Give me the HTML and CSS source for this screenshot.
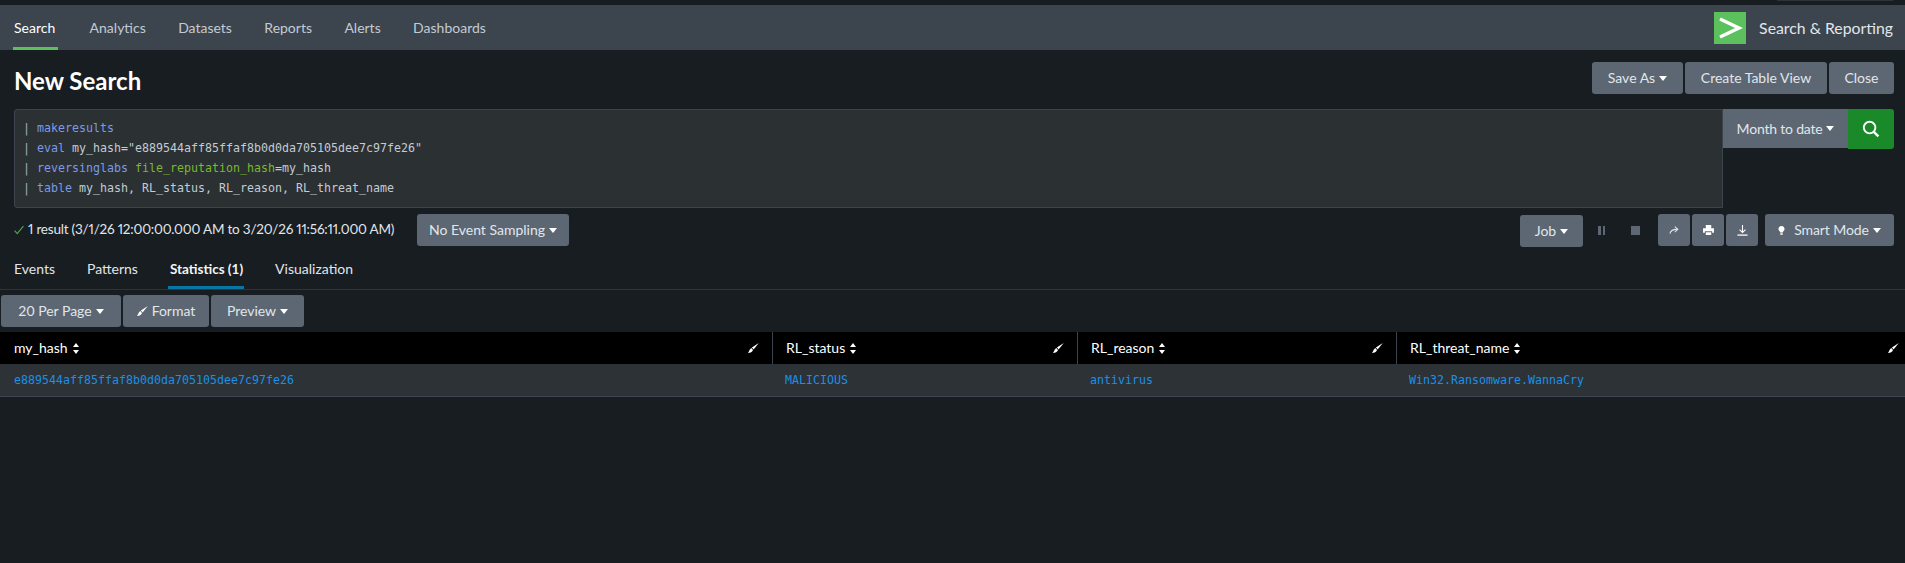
FILE: index.html
```html
<!DOCTYPE html>
<html lang="en">
<head>
<meta charset="utf-8">
<title>New Search</title>
<link rel="stylesheet" href="styles.css">
</head>
<body>
<div class="topstrip"><div class="topmark"></div></div>
<nav class="appnav">
  <a class="navlink active">Search</a>
  <a class="navlink">Analytics</a>
  <a class="navlink">Datasets</a>
  <a class="navlink">Reports</a>
  <a class="navlink">Alerts</a>
  <a class="navlink">Dashboards</a>
  <div class="appbrand">
    <svg class="applogo" viewBox="0 0 32 32"><rect width="32" height="32" fill="#5cc05c"/><path d="M6 7 25 16 6 25" fill="none" stroke="#fff" stroke-width="3.4"/></svg>
    <span>Search &amp; Reporting</span>
  </div>
</nav>
<header class="titlerow">
  <h1>New Search</h1>
  <div class="btngroup">
    <button class="btn savebtn">Save As<i class="caret"></i></button>
    <button class="btn ctvbtn">Create Table View</button>
    <button class="btn closebtn">Close</button>
  </div>
</header>
<section class="searchbar">
  <div class="query">
    <div><span class="pipe">|</span> <span class="cmd">makeresults</span></div>
    <div><span class="pipe">|</span> <span class="cmd">eval</span> my_hash="e889544aff85ffaf8b0d0da705105dee7c97fe26"</div>
    <div><span class="pipe">|</span> <span class="cmd">reversinglabs</span> <span class="arg">file_reputation_hash</span>=my_hash</div>
    <div><span class="pipe">|</span> <span class="cmd">table</span> my_hash, RL_status, RL_reason, RL_threat_name</div>
  </div>
  <button class="btn timebtn">Month to date<i class="caret"></i></button>
  <button class="gobtn" aria-label="Search">
    <svg viewBox="0 0 18 18" width="18" height="18"><circle cx="7.6" cy="7.6" r="5.8" fill="none" stroke="#fff" stroke-width="1.9"/><path d="M11.8 11.8 16.4 16.4" stroke="#fff" stroke-width="2.4"/></svg>
  </button>
</section>
<section class="statusrow">
  <svg class="check" viewBox="0 0 10 10" width="10" height="10"><path d="M.6 5.6 3.2 8.6 9.4 1.2" fill="none" stroke="#53a051" stroke-width="1.2"/></svg>
  <span class="resulttext">1 result (3/1/26 12:00:00.000 AM to 3/20/26 11:56:11.000 AM)</span>
  <button class="btn samplebtn">No Event Sampling<i class="caret"></i></button>
  <div class="spacer"></div>
  <button class="btn jobbtn">Job<i class="caret"></i></button>
  <span class="jobicon pause"><i></i><i></i></span>
  <span class="jobicon stop"></span>
  <button class="btn iconbtn" aria-label="Share">
    <svg viewBox="0 0 12 10" width="10" height="8"><path d="M1 9.6C1.4 5.6 4 4.2 9.6 4.2" fill="none" stroke="#e1e6eb" stroke-width="1.3"/><path d="M7 .8 10.8 4.2 7 7.6" fill="none" stroke="#e1e6eb" stroke-width="1.3"/></svg>
  </button>
  <button class="btn iconbtn" aria-label="Print">
    <svg viewBox="0 0 12 11" width="11" height="10"><path d="M3 0h6v3.5H3zM0 3.5h12v5H10V7H2v1.5H0zM3 8h6v3H3z" fill="#fff"/></svg>
  </button>
  <button class="btn iconbtn" aria-label="Export">
    <svg viewBox="0 0 12 12" width="11" height="11"><path d="M6 0v7.5M2.8 5 6 8.2 9.2 5" fill="none" stroke="#fff" stroke-width="1.2"/><path d="M.5 11h11" stroke="#fff" stroke-width="1.4"/></svg>
  </button>
  <button class="btn modebtn">
    <svg viewBox="0 0 8 11" width="7" height="9"><path d="M4 0a3.6 3.6 0 0 1 2.2 6.5L5.7 8H2.3l-.5-1.5A3.6 3.6 0 0 1 4 0zM2.5 9h3v1.6h-3z" fill="#fff"/></svg>
    <span class="modelabel">Smart Mode</span><i class="caret"></i>
  </button>
</section>
<div class="tabs">
  <a class="tab">Events</a>
  <a class="tab">Patterns</a>
  <a class="tab active">Statistics (1)</a>
  <a class="tab">Visualization</a>
</div>
<div class="tabletools">
  <button class="btn perpage">20 Per Page<i class="caret"></i></button>
  <button class="btn formatbtn">
    <svg class="brush" viewBox="0 0 11 10" width="11" height="10"><path d="M10.8 0 3.9 4.4 5.6 6.4zM3.2 5 5 7C4.4 8.8 2.4 10 0 10 1.3 8.6 1.2 6.4 3.2 5z" fill="#fff"/></svg>
    Format
  </button>
  <button class="btn previewbtn">Preview<i class="caret"></i></button>
</div>
<table class="results">
  <colgroup><col class="c1"><col class="c2"><col class="c3"><col class="c4"></colgroup>
  <thead>
    <tr>
      <th><div class="thwrap"><span>my_hash</span><span class="sort"></span><svg class="brush" viewBox="0 0 11 10" width="11" height="10"><path d="M10.8 0 3.9 4.4 5.6 6.4zM3.2 5 5 7C4.4 8.8 2.4 10 0 10 1.3 8.6 1.2 6.4 3.2 5z" fill="#fff"/></svg></div></th>
      <th><div class="thwrap"><span>RL_status</span><span class="sort"></span><svg class="brush" viewBox="0 0 11 10" width="11" height="10"><path d="M10.8 0 3.9 4.4 5.6 6.4zM3.2 5 5 7C4.4 8.8 2.4 10 0 10 1.3 8.6 1.2 6.4 3.2 5z" fill="#fff"/></svg></div></th>
      <th><div class="thwrap"><span>RL_reason</span><span class="sort"></span><svg class="brush" viewBox="0 0 11 10" width="11" height="10"><path d="M10.8 0 3.9 4.4 5.6 6.4zM3.2 5 5 7C4.4 8.8 2.4 10 0 10 1.3 8.6 1.2 6.4 3.2 5z" fill="#fff"/></svg></div></th>
      <th><div class="thwrap"><span>RL_threat_name</span><span class="sort"></span><svg class="brush" viewBox="0 0 11 10" width="11" height="10"><path d="M10.8 0 3.9 4.4 5.6 6.4zM3.2 5 5 7C4.4 8.8 2.4 10 0 10 1.3 8.6 1.2 6.4 3.2 5z" fill="#fff"/></svg></div></th>
    </tr>
  </thead>
  <tbody>
    <tr>
      <td>e889544aff85ffaf8b0d0da705105dee7c97fe26</td>
      <td>MALICIOUS</td>
      <td>antivirus</td>
      <td>Win32.Ransomware.WannaCry</td>
    </tr>
  </tbody>
</table>
</body>
</html>
```
FILE: styles.css
```css
* { box-sizing: border-box; }
html, body { margin: 0; height: 563px; overflow: hidden; }
body { background: #171d21; color: #fff; font: 14px/20px Lato, "Noto Sans", sans-serif; }
button { font: inherit; color: inherit; }

.topstrip { height: 5px; background: #171d21; display: flex; justify-content: flex-end; padding-right: 12px; }
.topmark { width: 116px; height: 1px; background: #2c3236; }
.appnav { height: 45px; background: #3c444d; display: flex; padding: 0 12px 0 14px; gap: 32.4px; align-items: stretch; }
.navlink { color: #c3cbd4; line-height: 45px; position: relative; font-size: 14px; }
.navlink.active { color: #fff; margin-right: 2px; }
.navlink.active::after { content: ""; position: absolute; left: -1px; right: -3px; bottom: 0; height: 3px; background: #5cc05c; }
.appbrand { margin-left: auto; display: flex; align-items: center; gap: 13px; font-size: 15.8px; color: #e1e6eb; }
.applogo { width: 32px; height: 32px; display: block; }

.titlerow { display: flex; justify-content: space-between; align-items: flex-start; padding: 12px 11px 0 14px; height: 59px; }
h1 { margin: 0; font-size: 24px; font-weight: 700; line-height: 38px; }
.btngroup { display: flex; gap: 2px; }

.btn { height: 32px; background: #5c6773; border: 0; border-radius: 3px; padding: 0; color: #e1e6eb; display: inline-flex; align-items: center; justify-content: center; white-space: nowrap; font-size: 14px; }
.caret { display: inline-block; width: 0; height: 0; border: 4px solid transparent; border-top: 5px solid #fff; border-bottom: 0; margin-left: 4px; }
.savebtn { width: 91px; }
.ctvbtn { width: 142px; }
.closebtn { width: 65px; }

.searchbar { display: flex; margin: 0 11px 0 14px; height: 99px; align-items: flex-start; }
.query { flex: 1; height: 99px; background: #2b3033; border: 1px solid #3c444d; border-radius: 3px 0 0 3px; padding: 8px; font: 11.63px/20px "DejaVu Sans Mono", monospace; color: #c3cbd4; }
.query .cmd { color: #7c9ae8; }
.query .arg { color: #7ab82c; }
.query .pipe { color: #a7b0ba; }
.timebtn { width: 125px; height: 39px; border-radius: 0; letter-spacing: -.2px; }
.gobtn { width: 46px; height: 40px; background: #1a8929; border: 0; border-radius: 0 3px 3px 0; display: flex; align-items: center; justify-content: center; padding: 0; }

.statusrow { display: flex; align-items: flex-start; padding: 6px 11px 0 14px; height: 49px; }
.check { margin: 11px 4px 0 0; }
.resulttext { line-height: 30px; color: #e1e6eb; font-size: 13.5px; width: 389px; white-space: nowrap; font-variant-numeric: proportional-nums; letter-spacing: -.2px; }
.spacer { flex: 1; }
.samplebtn { width: 152px; }
.jobbtn { width: 63px; margin-top: 1px; }
.jobicon { display: flex; margin-top: 12px; }
.pause { width: 7px; height: 9px; margin-left: 15px; gap: 2px; }
.pause i { width: 2.5px; height: 9px; background: #5c6773; display: block; }
.stop { width: 9px; height: 9px; margin-left: 26px; background: #5c6773; margin-right: 18px; }
.iconbtn { width: 32px; margin-right: 2px; }
.modebtn { width: 129px; margin-left: 5px; }
.modelabel { margin-left: 9px; letter-spacing: -.1px; }

.tabs { display: flex; height: 33px; padding: 0 0 0 14px; gap: 32px; border-bottom: 1px solid #2e353a; align-items: stretch; }
.tab { color: #e1e6eb; line-height: 20px; padding-top: 2px; position: relative; font-size: 14px; }
.tab.active { font-weight: 700; font-size: 13.5px; color: #f2f4f5; }
.tab.active::after { content: ""; position: absolute; left: -2px; right: -1px; bottom: 0; background: #0877a6; height: 3px; }

.tabletools { display: flex; gap: 2px; padding: 5px 0 0 1px; height: 42px; }
.perpage { width: 120px; }
.formatbtn { width: 86px; gap: 4px; }
.previewbtn { width: 93px; }

.results { width: 100%; border-collapse: separate; border-spacing: 0; table-layout: fixed; }
.c1 { width: 772px; }
.c2 { width: 305px; }
.c3 { width: 319px; }
.results th { height: 32px; background: #000; padding: 0 13px 0 13px; font-weight: 400; text-align: left; border-left: 1px solid #3c444d; color: #fff; }
.results th:first-child { border-left: 0; padding-left: 14px; }
.results th:last-child { padding-right: 6px; }
.thwrap { display: flex; align-items: center; }
.thwrap .brush { margin-left: auto; }
.sort { width: 7px; height: 11px; margin-left: 5px; position: relative; display: block; }
.sort::before, .sort::after { content: ""; position: absolute; left: 0; border: 3.5px solid transparent; }
.sort::before { top: 0; border-bottom: 4.5px solid #fff; border-top: 0; }
.sort::after { bottom: 0; border-top: 4.5px solid #fff; border-bottom: 0; }
.results td { height: 33px; background: #2c3236; border-bottom: 1px solid #3c444d; padding: 0 0 0 13px; font: 11.63px/20px "DejaVu Sans Mono", monospace; color: #1a90e6; }
.results td:first-child { padding-left: 14px; }
```
